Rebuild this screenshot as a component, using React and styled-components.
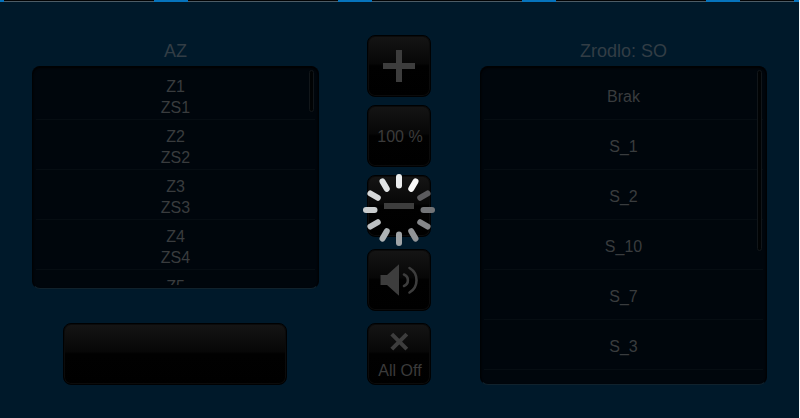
import React from "react";
import styled, { createGlobalStyle } from "styled-components";

const GlobalStyle = createGlobalStyle`
  * { box-sizing: border-box; }
  body {
    margin: 0;
    overflow: hidden;
    background: #f4f6f7;
    font-family: "Liberation Sans", Arial, sans-serif;
    color: #393c3e;
  }
`;

const Screen = styled.main`
  position: relative;
  width: 799px;
  height: 418px;
  overflow: hidden;
  background: #00192a;
`;

const TabStrip = styled.nav`
  display: flex;
  gap: 34px;
  height: 2px;
  padding-left: 4px;
  background: #0674bd;
`;

const TabEdge = styled.div`
  flex: 0 0 ${(p) => p.$width}px;
  background: #020304;
  border-bottom: 1px solid #4c5c66;
`;

const Columns = styled.div`
  display: grid;
  grid-template-columns: 287px 65px 287px;
  column-gap: 48px;
  padding: 33px 0 0 32px;
`;

const Column = styled.section`
  display: flex;
  flex-direction: column;
  align-items: center;
`;

const Title = styled.h2`
  margin: 0;
  height: 31px;
  padding-top: 1px;
  line-height: 31px;
  font-size: 18px;
  font-weight: 400;
  color: #323d45;
`;

const Panel = styled.div`
  position: relative;
  width: 287px;
  height: ${(p) => p.$height}px;
  padding: 3px;
  border: 1px solid #000204;
  border-top-color: #000102;
  border-bottom-color: #10222d;
  border-radius: 8px;
  background: #00060c;
  box-shadow: inset 0 1px 2px #000;
`;

const List = styled.ul`
  height: 100%;
  margin: 0;
  padding: 0;
  overflow: hidden;
  list-style: none;
`;

const Row = styled.li`
  display: flex;
  flex-direction: column;
  align-items: center;
  justify-content: center;
  height: 50px;
  padding-top: ${(p) => (p.$double ? 4 : 3)}px;
  border-bottom: 1px solid #060d12;
  font-size: 16px;
  line-height: 21px;
`;

const ScrollThumb = styled.div`
  position: absolute;
  top: 3px;
  right: 4px;
  width: 5px;
  height: ${(p) => p.$height}px;
  border: 1px solid #11161a;
  border-radius: 3px;
  background: #010304;
`;

const Controls = styled.div`
  display: grid;
  grid-template-rows: repeat(5, 63px);
  row-gap: 7px;
`;

const Button = styled.button`
  display: flex;
  flex-direction: column;
  align-items: center;
  justify-content: center;
  width: ${(p) => p.$width || 64}px;
  height: 62px;
  margin: ${(p) => p.$top || 0}px ${(p) => (p.$width ? 1 : 0)}px 0 0;
  padding: 0;
  border: 1px solid #000102;
  border-radius: 8px;
  background: linear-gradient(#151515, #070707 46%, #010101 50%, #000);
  box-shadow: inset 0 0 0 1px #0b0b0b;
  font: 16px "Liberation Sans", Arial, sans-serif;
  color: #3b3b3b;
`;

const Glyph = styled.svg`
  display: block;
  width: 62px;
  height: ${(p) => p.$height || 60}px;
  flex: none;
`;

const Level = styled.span`
  padding: 1px 0 0 2px;
`;

const OffLabel = styled.span`
  height: 24px;
  line-height: 22px;
  white-space: nowrap;
  padding-left: 2px;
`;

const Spinner = styled.svg`
  position: absolute;
  left: 363px;
  top: 174px;
  width: 72px;
  height: 72px;
`;

const zones = [["Z1", "ZS1"], ["Z2", "ZS2"], ["Z3", "ZS3"], ["Z4", "ZS4"], ["Z5"]];
const sources = ["Brak", "S_1", "S_2", "S_10", "S_7", "S_3", ""];
const spokes = ["#eceeef", "#fafafa", "#5b5b5e", "#727477", "#85878a", "#929497", "#a0a4a7", "#aeb3b5", "#bcc0c2", "#c9cdce", "#d5d8d9", "#e1e4e5"];

const LastZone = styled(Row)`
  justify-content: flex-start;
  padding-top: 6px;
`;

function BusySpinner() {
  return (
    <Spinner viewBox="0 0 72 72" role="status" aria-label="Loading">
      {spokes.map((color, i) => (
        <line key={color} x1="36" y1="3" x2="36" y2="11.5" stroke={color} strokeWidth="6"
          strokeLinecap="round" transform={`rotate(${i * 30} 36 36)`} />
      ))}
    </Spinner>
  );
}

export default function App() {
  return (
    <>
      <GlobalStyle />
      <Screen>
        <TabStrip>
          {[150, 150, 150, 150, 54].map((width, i) => <TabEdge key={i} $width={width} />)}
        </TabStrip>
        <Columns>
          <Column>
            <Title>AZ</Title>
            <Panel $height={223}>
              <List>
                {zones.map(([name, label]) => label
                  ? <Row key={name} $double><span>{name}</span><span>{label}</span></Row>
                  : <LastZone key={name} $double><span>{name}</span></LastZone>)}
              </List>
              <ScrollThumb $height={42} />
            </Panel>
            <Button $width={224} $top={34} aria-label="Zone" />
          </Column>
          <Controls>
            <Button aria-label="Volume up">
              <Glyph viewBox="0 0 62 60"><path d="M28 14h6v13h13v6H34v13h-6V33H15v-6h13z" fill="#3d3d3d" /></Glyph>
            </Button>
            <Button><Level>100 %</Level></Button>
            <Button aria-label="Volume down">
              <Glyph viewBox="0 0 62 60"><path d="M16 27h30v6H16z" fill="#3d3d3d" /></Glyph>
            </Button>
            <Button $top={4} aria-label="Mute">
              <Glyph viewBox="0 0 62 60">
                <path d="M12.5 25H19L31 14.3v31.4L19 35h-6.5z" fill="#3d3d3d" />
                <path d="M36 24.5a6.2 6.2 0 0 1 0 11.5M41.5 18a14.2 14.2 0 0 1 0 24.5" fill="none" stroke="#3d3d3d" strokeWidth="2.6" strokeLinecap="round" />
              </Glyph>
            </Button>
            <Button $top={8}>
              <Glyph $height={36} viewBox="0 0 62 36"><path d="M23.8 10.2l15 15M38.8 10.2l-15 15" stroke="#3d3d3d" strokeWidth="4" /></Glyph>
              <OffLabel>All Off</OffLabel>
            </Button>
          </Controls>
          <Column>
            <Title>Zrodlo: SO</Title>
            <Panel $height={319}>
              <List>
                {sources.map((source, i) => <Row key={i}>{source}</Row>)}
              </List>
              <ScrollThumb $height={181} />
            </Panel>
          </Column>
        </Columns>
        <BusySpinner />
      </Screen>
    </>
  );
}
